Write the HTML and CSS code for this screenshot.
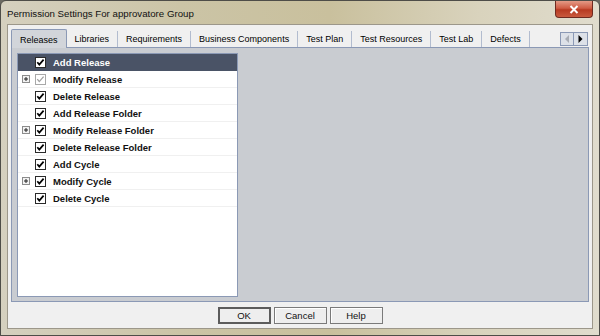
FILE: index.html
```html
<!DOCTYPE html>
<html lang="en">
<head>
    <meta charset="UTF-8">
    <title>Permission Settings For approvatore Group</title>
    <link rel="stylesheet" href="styles.css">
</head>
<body>
    <svg class="defs" width="0" height="0">
        <symbol id="chk" viewBox="0 0 11 11">
            <rect x="0.5" y="0.5" width="10" height="10" fill="#fff" stroke="#2a2a2a"/>
            <path d="M2.3 5.2 L4.3 7.6 L8.6 2.6" fill="none" stroke="#000" stroke-width="1.7"/>
        </symbol>
        <symbol id="chk-off" viewBox="0 0 11 11">
            <rect x="0.5" y="0.5" width="10" height="10" fill="#fff" stroke="#a8a8a8"/>
            <path d="M2.3 5.2 L4.3 7.6 L8.6 2.6" fill="none" stroke="#a0a0a0" stroke-width="1.3"/>
        </symbol>
        <symbol id="plus" viewBox="0 0 8 8">
            <rect x="0.5" y="0.5" width="7" height="7" fill="#f2f2f2" stroke="#8c8c8c"/>
            <path d="M2 4 H6 M4 2 V6" stroke="#222" stroke-width="1"/>
        </symbol>
    </svg>

    <div class="window">
        <div class="titlebar">
            <span class="title">Permission Settings For approvatore Group</span>
            <div class="close">
                <svg width="10" height="9" viewBox="0 0 10 9"><path d="M1.5 1 L8.5 8 M8.5 1 L1.5 8" stroke="#fff" stroke-width="2"/></svg>
            </div>
        </div>

        <div class="client">
            <div class="tabs">
                <div class="tab active">Releases</div>
                <div class="tab">Libraries</div>
                <div class="tab">Requirements</div>
                <div class="tab">Business Components</div>
                <div class="tab">Test Plan</div>
                <div class="tab">Test Resources</div>
                <div class="tab">Test Lab</div>
                <div class="tab">Defects</div>
                <div class="scroller">
                    <div class="scroll-btn">
                        <svg width="5" height="8" viewBox="0 0 5 8"><path d="M4 0 V8 L0 4 Z" fill="#a8acb4"/></svg>
                    </div>
                    <div class="scroll-btn">
                        <svg width="5" height="8" viewBox="0 0 5 8"><path d="M0.5 0 V8 L4.5 4 Z" fill="#000"/></svg>
                    </div>
                </div>
            </div>

            <div class="panel">
                <div class="tree">
                    <div class="row selected">
                        <span class="expander"></span>
                        <svg class="box"><use href="#chk"/></svg>
                        <span class="label">Add Release</span>
                    </div>
                    <div class="row">
                        <svg class="expander"><use href="#plus"/></svg>
                        <svg class="box"><use href="#chk-off"/></svg>
                        <span class="label">Modify Release</span>
                    </div>
                    <div class="row">
                        <span class="expander"></span>
                        <svg class="box"><use href="#chk"/></svg>
                        <span class="label">Delete Release</span>
                    </div>
                    <div class="row">
                        <span class="expander"></span>
                        <svg class="box"><use href="#chk"/></svg>
                        <span class="label">Add Release Folder</span>
                    </div>
                    <div class="row">
                        <svg class="expander"><use href="#plus"/></svg>
                        <svg class="box"><use href="#chk"/></svg>
                        <span class="label">Modify Release Folder</span>
                    </div>
                    <div class="row">
                        <span class="expander"></span>
                        <svg class="box"><use href="#chk"/></svg>
                        <span class="label">Delete Release Folder</span>
                    </div>
                    <div class="row">
                        <span class="expander"></span>
                        <svg class="box"><use href="#chk"/></svg>
                        <span class="label">Add Cycle</span>
                    </div>
                    <div class="row">
                        <svg class="expander"><use href="#plus"/></svg>
                        <svg class="box"><use href="#chk"/></svg>
                        <span class="label">Modify Cycle</span>
                    </div>
                    <div class="row">
                        <span class="expander"></span>
                        <svg class="box"><use href="#chk"/></svg>
                        <span class="label">Delete Cycle</span>
                    </div>
                </div>
            </div>

            <div class="buttons">
                <button class="default">OK</button>
                <button>Cancel</button>
                <button>Help</button>
            </div>
        </div>
    </div>
</body>
</html>
```

FILE: styles.css
```css
body {
    margin: 0;
    font-family: "Liberation Sans", Arial, sans-serif;
    background: #6b6a62;
}
.defs {
    position: absolute;
}
.window {
    width: 600px;
    height: 336px;
    box-sizing: border-box;
    display: flex;
    flex-direction: column;
    padding: 0 6px 6px;
    border: 1px solid #4e4d48;
    border-radius: 6px 6px 0 0;
    background: linear-gradient(90deg, #d5d0bf 0%, #cbc4a6 30%, #c9c09d 55%, #d9d3bd 80%, #e0dccd 100%);
}
.titlebar {
    height: 23px;
    display: flex;
    justify-content: space-between;
    align-items: flex-start;
}
.title {
    font-size: 9.7px;
    color: #111;
    margin-top: 7px;
}
.close {
    width: 38px;
    height: 17px;
    box-sizing: border-box;
    border: 1px solid #6e2a20;
    border-top: none;
    border-radius: 0 0 4px 4px;
    background: linear-gradient(#e49a86, #cf5c44 45%, #b73a22 55%, #c95a3e);
    display: flex;
    justify-content: center;
    align-items: center;
}
.client {
    flex: 1;
    display: flex;
    flex-direction: column;
    padding: 3px 3px 0;
    background: #f0f0f0;
    border: 1px solid #9c978a;
}
.tabs {
    height: 19px;
    display: flex;
    align-items: flex-end;
    font-size: 9px;
}
.tab {
    height: 16px;
    line-height: 16px;
    padding: 0 8px;
    box-sizing: border-box;
    border-right: 1px solid #b2bccf;
    color: #000;
    white-space: nowrap;
}
.tab.active {
    height: 19px;
    line-height: 20px;
    padding: 0 8px;
    border: 1px solid #8b99b5;
    border-bottom: none;
    border-radius: 2px 2px 0 0;
    background: #d2d5da;
    margin-bottom: -1px;
    position: relative;
}
.scroller {
    margin-left: auto;
    margin-right: 1px;
    margin-bottom: 1px;
    display: flex;
}
.scroll-btn {
    width: 14px;
    height: 14px;
    box-sizing: border-box;
    border: 1px solid #8b99b5;
    background: #dde1e8;
    display: flex;
    justify-content: center;
    align-items: center;
}
.scroll-btn + .scroll-btn {
    border-left: none;
}
.panel {
    height: 255px;
    box-sizing: border-box;
    padding: 5px 5px 4px;
    background: #c9ccd1;
    border: 1px solid #8b99b5;
}
.tree {
    width: 221px;
    height: 100%;
    box-sizing: border-box;
    background: #fff;
    border: 1px solid #8b99b5;
}
.row {
    height: 17px;
    box-sizing: border-box;
    display: flex;
    align-items: center;
    border-bottom: 1px solid #f0f0f0;
    font-size: 9.5px;
    font-weight: bold;
    color: #111;
}
.row.selected {
    background: #4a5366;
    color: #fff;
    border-bottom-color: #4a5366;
}
.expander {
    width: 8px;
    height: 8px;
    margin-left: 4px;
}
.box {
    width: 11px;
    height: 11px;
    margin-left: 5px;
}
.label {
    margin-left: 7px;
}
.buttons {
    display: flex;
    justify-content: center;
    gap: 3px;
    padding-top: 5px;
}
button {
    width: 53px;
    height: 17px;
    padding: 0;
    font-family: "Liberation Sans", Arial, sans-serif;
    font-size: 9.5px;
    color: #111;
    background: #eeeeee;
    border: 1px solid #7a7a7a;
    box-shadow: inset 1px 1px 0 #fff;
}
button.default {
    border: 2px solid #5c5c5c;
    box-shadow: none;
}
```
